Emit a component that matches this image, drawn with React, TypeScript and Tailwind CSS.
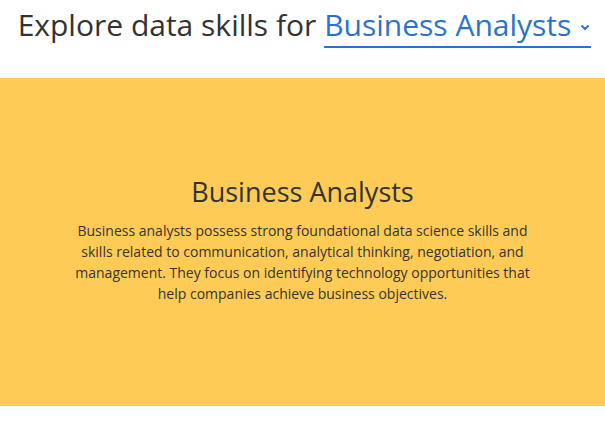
import React from 'react';

const font = { fontFamily: '"Open Sans", "Noto Sans", sans-serif' };

export default function App() {
  return (
    <div className="w-[605px] h-[421px] bg-white text-[#333333]" style={font}>
      <header className="h-[78px] flex justify-center pt-[5px] pl-[4px]">
        <h1 className="text-[30px] leading-[40px] font-normal whitespace-nowrap flex items-start">
          <span>Explore data skills for&nbsp;</span>
          <span className="flex items-center gap-[9px] text-[#2a73cc] border-b-2 border-[#2a73cc] pb-[1px] pr-[1px]">
            Business Analysts
            <svg width="10" height="7" viewBox="0 0 10 7" className="mt-[4px]">
              <path d="M1.5 1.5 L5 5 L8.5 1.5" fill="none" stroke="#2a73cc" strokeWidth="2" />
            </svg>
          </span>
        </h1>
      </header>
      <section className="h-[328px] bg-[#fecc56] flex flex-col items-center justify-center pb-[6px]">
        <h2 className="text-[27px] leading-[36px] font-normal mb-[10px]">Business Analysts</h2>
        <p className="w-[470px] text-center text-[14px] leading-[21px]">
          Business analysts possess strong foundational data science skills and skills related to
          communication, analytical thinking, negotiation, and management. They focus on identifying
          technology opportunities that help companies achieve business objectives.
        </p>
      </section>
    </div>
  );
}
